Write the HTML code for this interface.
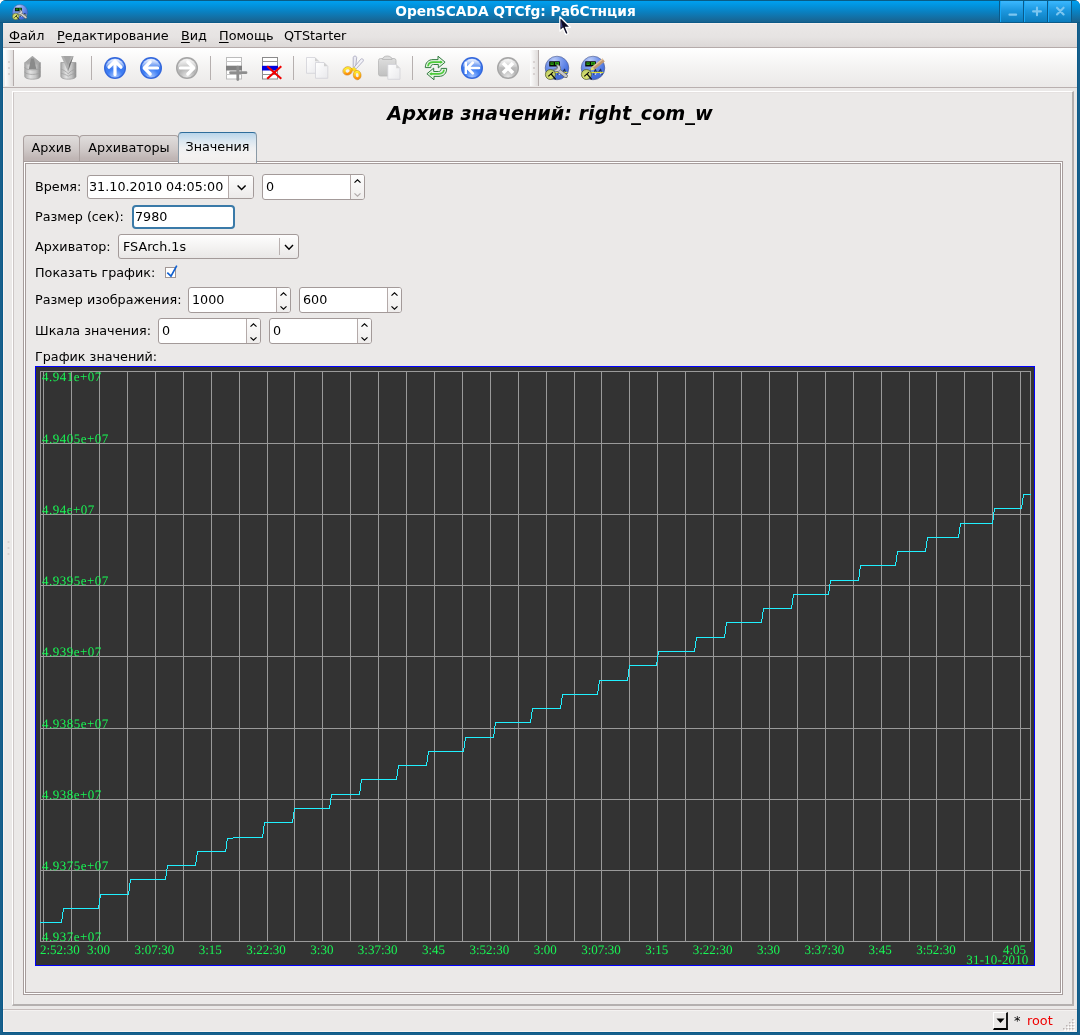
<!DOCTYPE html>
<html lang="ru"><head><meta charset="utf-8"><title>OpenSCADA QTCfg: РабСтнция</title>
<style>
html,body{margin:0;padding:0;}
body{width:1080px;height:1035px;overflow:hidden;background:#fff;position:relative;
 font-family:"DejaVu Sans","Liberation Sans",sans-serif;font-size:13px;color:#000;}
*{box-sizing:border-box;}
.abs{position:absolute;}
#win{will-change:transform;position:absolute;left:0;top:0;width:1080px;height:1035px;background:#18608c;border-radius:6px 6px 0 0;overflow:hidden;}
#titlebar{position:absolute;left:0;top:0;width:1080px;height:23px;
 background:linear-gradient(#0a5c86 0,#0a5c86 1px,#00a0f0 1px,#0292dc 6px,#0a80c0 12px,#146ea2 18px,#18628e 22px,#0a5a86 22px);}
#title{position:absolute;left:0;top:2px;width:1031px;text-align:center;color:#fff;font-weight:bold;font-size:13.75px;line-height:18px;white-space:nowrap;}
.tbtn{position:absolute;top:1px;width:24px;height:21px;background:linear-gradient(#3ab8ff,#1c98e0 45%,#0c7cbc);border-left:1px solid #0a5a8a;box-shadow:inset 1px 0 0 #18a8f8;}
.tbtn svg{position:absolute;left:0;top:0}
#client{position:absolute;left:3px;top:23px;width:1074px;height:1009px;background:#ebe9e8;box-shadow:inset 1px 0 0 #f8f2f0,inset 0 -1px 0 #f8f2f0,0 0 0 1px #0c5a88;}
#menubar{position:absolute;left:0;top:0;width:1074px;height:25px;background:linear-gradient(#f6efed 0,#f6efed 1px,#ebe8e7 1px,#e6e3e2 60%,#dcd8d7);border-bottom:1px solid #b5abaa;}
.mi{position:absolute;top:4px;font-size:12.800px;line-height:18px;white-space:nowrap;}
.mi u{text-decoration:underline;text-underline-offset:2px;}
#toolbar{position:absolute;left:0;top:25px;width:1074px;height:40px;background:linear-gradient(#ffffff,#f4f3f2 50%,#ebe9e8);border-bottom:1px solid #b9b0af;}
.tsep{position:absolute;top:8px;width:1px;height:24px;background:#b8b2b1;}
.ico{position:absolute;top:9px;width:24px;height:24px;}
.lbl{position:absolute;font-size:12.750px;line-height:16px;white-space:nowrap;}
.inp{position:absolute;background:#fff;border:1px solid #a39a99;border-radius:3px;font-size:12.750px;line-height:16px;white-space:nowrap;overflow:hidden;}
.inp span{position:absolute;left:3px;top:3px;}
.frame{position:absolute;border:1px solid #fff;}
.frame>i{position:absolute;left:0;top:0;right:0;bottom:0;border:1px solid #b4aaa9;}
.tab{position:absolute;border:1px solid #a89e9d;border-bottom:none;border-radius:4px 4px 0 0;font-size:12.750px;line-height:16px;text-align:center;white-space:nowrap;
 background:linear-gradient(#e0dddc,#d0cac9 50%,#c0b6b5 85%,#bdb3b2);border-color:#aaa09f;}
.tab.sel{background:linear-gradient(#b9d5ea,#d9e6f0 25%,#eef0f2 50%,#f4f2f1 75%,#f1efee);border-color:#2f6d9b #8a9aa6 #a69c9b #8a9aa6;}
.spinbtn{position:absolute;right:0;top:0;bottom:0;width:14px;overflow:hidden;border-left:1px solid #b4aaa9;background:linear-gradient(#fdfdfd,#efedec);}
.cbtn{position:absolute;right:0;top:0;bottom:0;width:25px;border-left:1px solid #b4aaa9;background:linear-gradient(#fdfdfd,#eceae9);}
#status{position:absolute;left:0;top:982px;width:1074px;height:26px;}
.frame3{position:absolute;border:1px solid #a69c9b;}
.frame3>i{position:absolute;left:0;top:0;right:0;bottom:0;border:1px solid #fff;}
.frame3>i>b{position:absolute;left:0;top:0;right:0;bottom:0;border:1px solid #a69c9b;}
.spinbtn svg,.cbtn svg{position:absolute;left:0;top:0}

</style></head>
<body>
<div id="win">
 <div id="titlebar">
  <div id="title">OpenSCADA QTCfg: РабСтнция</div>
  <svg class="abs" style="left:10px;top:2px" width="20" height="20" viewBox="-15.400 -15.700 30.800 30.800"><use href="#scada"/><path d="M0.400 1.400L8.800 8" stroke="#606060" stroke-width="4.200" stroke-linecap="round"/><path d="M0.400 1.400L8.800 8" stroke="#d0d0d0" stroke-width="2.800" stroke-linecap="round"/><path d="M-0.600 -3.200C1.600 -3.600 3.600 -2 3.600 0.400C3.600 2.400 1.800 3.600 0 3.600C-1.600 3.600 -3 2.600 -3.200 1L-0.800 1.400L0.600 0.200L0.200 -1.600Z" fill="#dcdcdc" stroke="#6a6a6a" stroke-width=".8" stroke-linejoin="round"/></svg>
  <div class="tbtn" style="left:999px"><svg width="24" height="21" viewBox="0 0 24 21"><rect x="8.400" y="12.500" width="8.800" height="2.300" rx="1.150" fill="#7cc6f0"/></svg></div>
  <div class="tbtn" style="left:1023px"><svg width="24" height="21" viewBox="0 0 24 21"><path d="M13 6.500V14.300M9.100 10.400H16.900" stroke="#7cc6f0" stroke-width="2.100" stroke-linecap="round" fill="none"/></svg></div>
  <div class="tbtn" style="left:1047px;width:25px;border-right:1px solid #0a5a8a"><svg width="24" height="21" viewBox="0 0 24 21"><path d="M9 6.700L15.600 13.500M15.600 6.700L9 13.500" stroke="#7cc6f0" stroke-width="2.100" stroke-linecap="round" fill="none"/></svg></div>
 </div>
 <div id="client">
  <div id="menubar">
   <div class="mi" style="left:6px"><u>Ф</u>айл</div>
   <div class="mi" style="left:54px"><u>Р</u>едактирование</div>
   <div class="mi" style="left:178px"><u>В</u>ид</div>
   <div class="mi" style="left:216px"><u>П</u>омощь</div>
   <div class="mi" style="left:281px">QTStarter</div>
  </div>
  <div id="toolbar">
  <svg class="abs" style="left:-3px;top:-48px" width="620" height="92" viewBox="0 0 620 92">
<defs>
 <linearGradient id="gcyl" x1="0" x2="1" y1="0" y2="0"><stop offset="0" stop-color="#a8a8a8"/><stop offset=".35" stop-color="#e2e2e2"/><stop offset=".7" stop-color="#c4c4c4"/><stop offset="1" stop-color="#8c8c8c"/></linearGradient>
 <linearGradient id="garr" x1="0" x2="0" y1="0" y2="1"><stop offset="0" stop-color="#8a8a8a"/><stop offset="1" stop-color="#a4a4a4"/></linearGradient>
 <radialGradient id="gblue" cx=".5" cy=".95" r=".9"><stop offset="0" stop-color="#a9c8ff"/><stop offset=".45" stop-color="#3f7ff4"/><stop offset=".75" stop-color="#3b78ee"/><stop offset="1" stop-color="#8fb4fb"/></radialGradient>
 <linearGradient id="gshine" x1="0" x2="0" y1="0" y2="1"><stop offset="0" stop-color="#fff" stop-opacity=".85"/><stop offset="1" stop-color="#fff" stop-opacity=".1"/></linearGradient>
 <radialGradient id="ggray" cx=".5" cy=".95" r=".9"><stop offset="0" stop-color="#e6e6e6"/><stop offset=".5" stop-color="#b4b4b4"/><stop offset="1" stop-color="#d0d0d0"/></radialGradient>
 <linearGradient id="gpage" x1="0" x2="1" y1="0" y2="1"><stop offset="0" stop-color="#ffffff"/><stop offset="1" stop-color="#e9e9ec"/></linearGradient>
 <linearGradient id="gclip" x1="0" x2="0" y1="0" y2="1"><stop offset="0" stop-color="#dedede"/><stop offset="1" stop-color="#c0c0c0"/></linearGradient>
 <linearGradient id="ggold" x1="0" x2="1" y1="0" y2="1"><stop offset="0" stop-color="#ffd24a"/><stop offset="1" stop-color="#e89a10"/></linearGradient>
 <linearGradient id="ggold2" gradientUnits="userSpaceOnUse" x1="0" x2="0" y1="66" y2="80"><stop offset="0" stop-color="#ffee30"/><stop offset=".5" stop-color="#ffc820"/><stop offset="1" stop-color="#ff9410"/></linearGradient>
 <linearGradient id="ggold3" x1="0" x2="0" y1="0" y2="1"><stop offset="0" stop-color="#ffee30"/><stop offset=".45" stop-color="#ffc41c"/><stop offset="1" stop-color="#ff8c08"/></linearGradient>
 <linearGradient id="ggreen" x1="0" x2="0" y1="0" y2="1"><stop offset="0" stop-color="#9ee89a"/><stop offset="1" stop-color="#3fae3f"/></linearGradient>
 <radialGradient id="gscada" cx=".38" cy=".18" r=".85"><stop offset="0" stop-color="#bccdf8"/><stop offset=".4" stop-color="#7898ec"/><stop offset=".75" stop-color="#4a74e0"/><stop offset="1" stop-color="#3c64d4"/></radialGradient>
 <filter id="bl" x="-20%" y="-20%" width="140%" height="140%"><feGaussianBlur stdDeviation=".45"/></filter>
 <g id="circ"><circle r="11" fill="#3468dc"/><circle r="9.6" fill="url(#gblue)"/><path d="M-9.200 -1.500A9.400 9.400 0 0 1 9.200 -1.500Q0 1.500 -9.200 -1.500Z" fill="url(#gshine)"/></g>
 <g id="gcirc"><circle r="11" fill="#a6a6a6"/><circle r="9.6" fill="url(#ggray)"/><path d="M-9.200 -1.500A9.400 9.400 0 0 1 9.200 -1.500Q0 1.500 -9.200 -1.500Z" fill="url(#gshine)"/></g>
 <g id="scada">
  <circle r="11.800" fill="url(#gscada)" stroke="#4a5888" stroke-width=".6"/>
  <path d="M0.800 7.200L2.200 1.200L3.600 4.400L5.600 4.400L7.600 1.200L9 6.800" stroke="#1c2c60" stroke-width="1.100" fill="none" stroke-linejoin="round"/>
  <path d="M1.600 5.600L2.300 6.800L3 5M7.200 5L7.800 6.200L8.400 5" stroke="#e8ecf8" stroke-width=".8" fill="none"/>
  <path d="M-9 4.400H10.300" stroke="#e4e430" stroke-width="1.100"/>
  <rect x="-7.800" y="-6.800" width="10.700" height="5.400" rx=".5" fill="#060a06"/>
  <path d="M-6.600 -5.800h3.300v2.900h-3.300zM-2 -6h4v3.100h-4z" fill="#2a9a10"/>
  <path d="M-5.600 -5.200h1.400v1.200h-1.400zM-0.600 -5.400l1.800 1.000l-1.800 1z" fill="#0a3a06" opacity=".7"/>
  <circle cx="-6.600" cy="6.500" r="5" fill="url(#ggauge)" stroke="#4a5220" stroke-width=".7"/>
  <path d="M-8.700 8.400L-4 4.100M-5.900 6L-1.300 11.400" stroke="#0c0c0c" stroke-width="1.200" fill="none"/>
 </g>
 <radialGradient id="ggauge" cx=".5" cy=".6" r=".6"><stop offset="0" stop-color="#e4ea70"/><stop offset="1" stop-color="#b8c868"/></radialGradient>
</defs>
<!-- handle 1 -->
<rect x="5" y="50" width="8" height="36" fill="url(#hgrad)"/>
<linearGradient id="hgrad" x1="0" x2="1" y1="0" y2="0"><stop offset="0" stop-color="#fdfdfd"/><stop offset="1" stop-color="#e0dddc"/></linearGradient>
<rect x="13" y="50" width="1" height="36" fill="#b4acab"/>
<g fill="#d2cccb"><circle cx="9" cy="62" r="1.1"/><circle cx="9" cy="68" r="1.1"/><circle cx="9" cy="74" r="1.1"/></g>
<!-- handle 2 -->
<rect x="530" y="50" width="8" height="36" fill="url(#hgrad)"/>
<rect x="538" y="50" width="1" height="36" fill="#b4acab"/>
<g fill="#d2cccb"><circle cx="534" cy="62" r="1.1"/><circle cx="534" cy="68" r="1.1"/><circle cx="534" cy="74" r="1.1"/></g>
<!-- separators -->
<g fill="#b6b0af"><rect x="91" y="56" width="1" height="24"/><rect x="210" y="56" width="1" height="24"/><rect x="293" y="56" width="1" height="24"/><rect x="412" y="56" width="1" height="24"/></g>

<!-- 1 db load -->
<g filter="url(#bl)">
 <path d="M24.700 62.500v14c0 1.600 3.500 2.700 7.850 2.700s7.850-1.100 7.850-2.700v-14z" fill="url(#gcyl)" stroke="#989898" stroke-width=".7"/>
 <path d="M24.700 67.200c0 1.600 3.500 2.700 7.850 2.700s7.850-1.100 7.850-2.700M24.700 71.700c0 1.600 3.500 2.700 7.850 2.700s7.850-1.100 7.850-2.700" stroke="#9c9c9c" stroke-width=".9" fill="none" opacity=".8"/>
 <path d="M32.400 56L39.600 62H25.400Z" fill="#a2a2a2"/>
 <path d="M25.400 62L32.400 56L39.600 62L38 64.500H27Z" fill="#a8a8a8" opacity=".9"/>
 <path d="M31 58.500H33.900L36.400 69.300H28.800Z" fill="#8a8a8a"/>
</g>
<!-- 2 db save -->
<g filter="url(#bl)">
 <path d="M60.800 62.500v14c0 1.600 3.400 2.700 7.600 2.700s7.600-1.100 7.600-2.700v-14z" fill="url(#gcyl)" stroke="#989898" stroke-width=".7"/>
 <path d="M60.800 69c2 .5 5.500 2.500 7.400 4.800c1.800-2.500 5.200-4.300 7.800-4.800M60.800 73.200c2 .5 5.500 1.500 7.400 3c1.800-1.500 5.200-2.500 7.800-3" stroke="#9c9c9c" stroke-width=".9" fill="none" opacity=".8"/>
 <path d="M61.100 56.100H73.600L68 71.500Z" fill="#b2b2b2"/>
 <path d="M63.500 56.100H71L68 66Z" fill="#a4a4a4"/>
 <path d="M73.600 56.100L68 71.500L69.200 64Z" fill="#6e6e6e"/>
</g>
<!-- 3 up -->
<g transform="translate(115 68)"><use href="#circ"/><path d="M0 -6.800L-6 -0.800M0 -6.800L6 -0.800M0 -5V6.600" stroke="#fff" stroke-width="3.200" stroke-linecap="round" fill="none"/></g>
<!-- 4 back -->
<g transform="translate(151 68)"><use href="#circ"/><path d="M-6.800 0L-0.800 -6M-6.800 0L-0.800 6M-5 0H6.600" stroke="#fff" stroke-width="3.200" stroke-linecap="round" fill="none"/></g>
<!-- 5 forward (disabled) -->
<g transform="translate(187 68)"><use href="#gcirc"/><path d="M6.800 0L0.800 -6M6.800 0L0.800 6M5 0H-6.600" stroke="#fff" stroke-width="3.200" stroke-linecap="round" fill="none"/></g>
<!-- 6 add item -->
<g>
 <rect x="226.500" y="57.500" width="15" height="21.500" fill="#fff" stroke="#bcbcbc" stroke-width="1"/>
 <path d="M226 61.500H242M226 74.500H242" stroke="#c4c4c4" stroke-width="1"/>
 <rect x="226" y="65.700" width="16" height="4.800" fill="#808080"/>
 <path d="M230.500 72.700H246M237.800 67.200V79.600" stroke="#8e8e8e" stroke-width="2.800" fill="none" stroke-linecap="round"/>
</g>
<!-- 7 del item -->
<g>
 <rect x="262.500" y="57.500" width="15" height="21.500" fill="#fff" stroke="#8a8a8a" stroke-width="1"/>
 <path d="M262 61.500H278M262 74.500H278" stroke="#909090" stroke-width="1"/>
 <rect x="262" y="65.800" width="16" height="4.700" fill="#0000e0"/>
 <path d="M267.200 66.200L281.300 78.800M281.300 66.200L267.200 78.800" stroke="#f00000" stroke-width="2.100" fill="none"/>
</g>
<!-- 8 copy (disabled) -->
<g filter="url(#bl)">
 <path d="M306.500 57.500h8.500l3.800 3.800v12h-12.300z" fill="url(#gpage)" stroke="#d2d2d8" stroke-width=".8"/>
 <path d="M315 57.500v3.800h3.800z" fill="#d0d0d0"/>
 <path d="M315.500 62.500h8.500l3.800 3.800v12h-12.300z" fill="url(#gpage)" stroke="#d2d2d8" stroke-width=".8"/>
 <path d="M324 62.500v3.800h3.800z" fill="#d0d0d0"/>
</g>
<!-- 9 cut -->
<g>
 <path d="M353.200 67.600V57.600C353.200 55.600 356.700 55.600 356.700 57.600L355.600 67.600Z" fill="#ececf4" stroke="#9a9ab2" stroke-width=".7"/>
 <path d="M354 67.400L360.600 59.400C362 57.800 364.300 59.600 363 61.300L356.200 68.800Z" fill="#f2f2f8" stroke="#9a9ab2" stroke-width=".7"/>
 <path d="M350.400 68.600L354.200 67.200L356.200 69.200L357.400 71.600L353 71.400Z" fill="url(#ggold2)"/>
 <ellipse cx="347.600" cy="70.900" rx="3.300" ry="2.850" transform="rotate(-18 347.600 70.900)" fill="none" stroke="url(#ggold3)" stroke-width="2.450"/>
 <ellipse cx="357.200" cy="75.100" rx="2.650" ry="3.400" transform="rotate(-8 357.200 75.100)" fill="none" stroke="url(#ggold3)" stroke-width="2.450"/>
 <ellipse cx="347.600" cy="70.900" rx="4.800" ry="4.200" transform="rotate(-18 347.600 70.900)" fill="none" stroke="#c87808" stroke-width=".6" opacity=".8"/>
 <ellipse cx="357.200" cy="75.100" rx="3.900" ry="4.700" transform="rotate(-8 357.200 75.100)" fill="none" stroke="#c87808" stroke-width=".6" opacity=".8"/>
</g>
<!-- 10 paste (disabled) -->
<g filter="url(#bl)">
 <rect x="378.500" y="58.500" width="17.500" height="17.500" rx="2" fill="url(#gclip)" stroke="#b8b8b8" stroke-width=".8"/>
 <path d="M382.500 59.500c0-2 2-3.500 4.800-3.500s4.800 1.500 4.800 3.500z" fill="#dcdcdc" stroke="#b4b4b4" stroke-width=".8"/>
 <path d="M387.800 64.500h8.400l3.800 3.800v11h-12.200z" fill="url(#gpage)" stroke="#d2d2d8" stroke-width=".8"/>
 <path d="M396.200 64.500v3.800h3.800z" fill="#d4d4d4"/>
</g>
<!-- 11 refresh -->
<g id="rfa">
 <path d="M425.300 67.600C425.300 62.500 428.500 59.600 433 59.600H438V56.200L445.100 62.200L438.300 67.900V64.500H433.500C431.500 64.500 430.800 65.800 430.800 67.600Z" fill="#e4f2e2" stroke="#327c40" stroke-width="1" stroke-linejoin="round"/>
 <path d="M428.100 65.600C428.600 63.400 430.400 62.150 433 62.150H441.400" stroke="#4ccc3a" stroke-width="1.700" stroke-linecap="round" fill="none"/>
 <path d="M440.200 60.500L442.600 62.150L440.200 63.800Z" fill="#4ccc3a"/>
</g>
<use href="#rfa" transform="rotate(180 436 68)"/>
<!-- 12 start -->
<g transform="translate(472 68)"><use href="#circ"/><path d="M-4.600 0L0.800 -5.400M-4.600 0L0.800 5.400M-3 0H7" stroke="#fff" stroke-width="2.700" stroke-linecap="round" fill="none"/><path d="M-6.200 -6V6" stroke="#fff" stroke-width="2.400" fill="none"/></g>
<!-- 13 stop (disabled) -->
<g transform="translate(508 68)"><use href="#gcirc"/><path d="M-5 -5L5 5M5 -5L-5 5" stroke="#fff" stroke-width="3.600" fill="none"/></g>
<!-- 14 scada cfg -->
<g transform="translate(557 68)"><use href="#scada"/>
 <path d="M0.400 1.400L8.800 8" stroke="#606060" stroke-width="4" stroke-linecap="round"/>
 <path d="M0.400 1.400L8.800 8" stroke="#c8c8c8" stroke-width="2.700" stroke-linecap="round"/>
 <path d="M-0.600 -3.200C1.600 -3.600 3.600 -2 3.600 0.400C3.600 2.400 1.800 3.600 0 3.600C-1.600 3.600 -3 2.600 -3.200 1L-0.800 1.400L0.600 0.200L0.200 -1.600Z" fill="#d4d4d4" stroke="#6a6a6a" stroke-width=".7" stroke-linejoin="round"/>
</g>
<!-- 15 scada dev -->
<g transform="translate(593 68)"><use href="#scada"/>
 <path d="M10.600 -8L0.200 0.200" stroke="#c09870" stroke-width="3.700"/>
 <path d="M9.900 -9L-0.500 -0.800" stroke="#e4c4a0" stroke-width="1.400"/>
 <path d="M-1 -1.600L1.600 1.600L-3.200 2.400Z" fill="#e8e070"/>
 <path d="M-2.400 1.400L-3.300 2.500L-1.900 2.300Z" fill="#181818"/>
</g>
</svg>

  </div>
 </div>

 <!-- central frame -->
 <div class="abs" style="left:12px;top:91px;width:1062px;height:915px;border-top:1px solid #fff;border-left:1px solid #fff;border-right:2px solid #b4b0af;border-bottom:2px solid #b4b0af"><div class="abs" style="left:0;top:0;right:0;bottom:0;border-left:1px solid #cdc7c6;border-top:1px solid #e6e2e1"></div></div>
 <div class="abs" id="heading" style="left:25px;top:101px;width:1050px;text-align:center;font-size:19.2px;line-height:26px;font-weight:bold;font-style:italic;white-space:nowrap">Архив значений: right_com_w</div>

 <svg class="abs" style="left:6px;top:539px" width="5" height="18" viewBox="0 0 5 18"><g fill="#d6d0cf"><circle cx="2.500" cy="3" r="1.100"/><circle cx="2.500" cy="9" r="1.100"/><circle cx="2.500" cy="15" r="1.100"/></g></svg>
 <!-- tabs -->
 <div class="tab" style="left:23px;top:135px;width:57px;height:27px;padding-top:4px">Архив</div>
 <div class="tab" style="left:79px;top:135px;width:100px;height:27px;padding-top:4px">Архиваторы</div>
 <div class="frame3" style="left:23px;top:161px;width:1040px;height:834px"><i><b></b></i></div>
 <div class="tab sel" style="left:178px;top:132px;width:79px;height:31px;padding-top:6px">Значения</div>

 <!-- form -->
 <div class="lbl" style="left:35px;top:179px">Время:</div>
 <div class="inp" style="left:87px;top:175px;width:167px;height:24px"><span style="left:1px">31.10.2010 04:05:00</span><div class="cbtn"><svg width="24" height="22" viewBox="0 0 24 22"><path d="M8.600 9.400L12.600 13.600L16.600 9.400" stroke="#000" stroke-width="1.400" fill="none"/></svg></div></div>
 <div class="inp" style="left:262px;top:174px;width:103px;height:26px"><span style="top:4px">0</span><div class="spinbtn"><svg width="13" height="24" viewBox="0 0 13 24"><path d="M3.500 7.700L6.500 4.800L9.500 7.700" stroke="#000" stroke-width="1.150" fill="none"/><path d="M3.500 18.300L6.500 21.200L9.500 18.300" stroke="#b0aaa9" stroke-width="1.150" fill="none"/></svg></div></div>

 <div class="lbl" style="left:35px;top:209px">Размер (сек):</div>
 <div class="inp" style="left:132px;top:205px;width:103px;height:24px;border:2px solid #3a7aa8;border-radius:4px"><span style="top:2px;left:1px">7980</span></div>

 <div class="lbl" style="left:35px;top:239px">Архиватор:</div>
 <div class="inp" style="left:118px;top:234px;width:181px;height:25px;background:linear-gradient(#fefefe,#f4f3f2 50%,#e9e7e6)"><span style="top:4px;left:4px">FSArch.1s</span><div class="abs" style="left:160px;top:3px;width:1px;height:17px;background:#b9b1b0"></div><svg class="abs" style="left:162px;top:0" width="18" height="23" viewBox="0 0 18 23"><path d="M4 10L8 14.300L12 10" stroke="#000" stroke-width="1.400" fill="none"/></svg></div>

 <div class="lbl" style="left:35px;top:265px">Показать график:</div>
 <div class="abs" style="left:165px;top:267px;width:11px;height:11px;background:#fff;border:1px solid #a09694"></div>
 <svg class="abs" style="left:163px;top:263px" width="16" height="16" viewBox="0 0 16 16"><path d="M4.300 9.600L8 13.200L13.800 2.600" stroke="#1060d0" stroke-width="1.650" fill="none" stroke-linejoin="miter"/></svg>

 <div class="lbl" style="left:35px;top:292px">Размер изображения:</div>
 <div class="inp" style="left:188px;top:287px;width:103px;height:26px"><span style="top:4px">1000</span><div class="spinbtn"><svg width="13" height="24" viewBox="0 0 13 24"><path d="M3.500 7.700L6.500 4.800L9.500 7.700" stroke="#000" stroke-width="1.150" fill="none"/><path d="M3.500 18.300L6.500 21.200L9.500 18.300" stroke="#000" stroke-width="1.150" fill="none"/></svg></div></div>
 <div class="inp" style="left:299px;top:287px;width:103px;height:26px"><span style="top:4px">600</span><div class="spinbtn"><svg width="13" height="24" viewBox="0 0 13 24"><path d="M3.500 7.700L6.500 4.800L9.500 7.700" stroke="#000" stroke-width="1.150" fill="none"/><path d="M3.500 18.300L6.500 21.200L9.500 18.300" stroke="#000" stroke-width="1.150" fill="none"/></svg></div></div>

 <div class="lbl" style="left:35px;top:323px">Шкала значения:</div>
 <div class="inp" style="left:158px;top:318px;width:103px;height:26px"><span style="top:4px">0</span><div class="spinbtn"><svg width="13" height="24" viewBox="0 0 13 24"><path d="M3.500 7.700L6.500 4.800L9.500 7.700" stroke="#000" stroke-width="1.150" fill="none"/><path d="M3.500 18.300L6.500 21.200L9.500 18.300" stroke="#000" stroke-width="1.150" fill="none"/></svg></div></div>
 <div class="inp" style="left:269px;top:318px;width:103px;height:26px"><span style="top:4px">0</span><div class="spinbtn"><svg width="13" height="24" viewBox="0 0 13 24"><path d="M3.500 7.700L6.500 4.800L9.500 7.700" stroke="#000" stroke-width="1.150" fill="none"/><path d="M3.500 18.300L6.500 21.200L9.500 18.300" stroke="#000" stroke-width="1.150" fill="none"/></svg></div></div>

 <div class="lbl" style="left:35px;top:349px">График значений:</div>

 <div class="abs" style="left:35px;top:366px;width:1000px;height:600px;">
<svg id="chart" width="1000" height="600" viewBox="0 0 1000 600" shape-rendering="crispEdges">
<rect x="0" y="0" width="1000" height="600" fill="#0000ff"/>
<rect x="1" y="1" width="998" height="598" fill="#333333"/>
<path d="M8.5 5V576M36.5 5V576M64.5 5V576M92.5 5V576M120.5 5V576M148.5 5V576M176.5 5V576M204.5 5V576M232.5 5V576M259.5 5V576M287.5 5V576M315.5 5V576M343.5 5V576M371.5 5V576M399.5 5V576M427.5 5V576M455.5 5V576M483.5 5V576M511.5 5V576M539.5 5V576M566.5 5V576M594.5 5V576M622.5 5V576M650.5 5V576M678.5 5V576M706.5 5V576M734.5 5V576M762.5 5V576M790.5 5V576M818.5 5V576M846.5 5V576M874.5 5V576M901.5 5V576M929.5 5V576M957.5 5V576M985.5 5V576M5 77.5H996M5 148.5H996M5 219.5H996M5 290.5H996M5 362.5H996M5 433.5H996M5 504.5H996" stroke="#9a9a9a" stroke-width="1" fill="none"/>
<rect x="5.5" y="5.5" width="990" height="570" fill="none" stroke="#9a9a9a" stroke-width="1"/>
<path d="M5 556h22v1h-22zM26 553h1v3h-1zM27 546h1v7h-1zM28 542h1v4h-1zM28 542h36v1h-36zM63 539h1v3h-1zM64 532h1v7h-1zM65 528h1v4h-1zM65 528h29v1h-29zM93 525h1v3h-1zM94 517h1v8h-1zM95 513h1v4h-1zM95 513h36v1h-36zM130 510h1v3h-1zM131 503h1v7h-1zM132 499h1v4h-1zM132 499h29v1h-29zM160 496h1v3h-1zM161 489h1v7h-1zM162 485h1v4h-1zM162 485h29v1h-29zM190 483h1v2h-1zM191 475h1v8h-1zM192 472h1v3h-1zM192 472h6v1h-6zM198 471h30v1h-30zM227 468h1v3h-1zM228 460h1v8h-1zM229 456h1v4h-1zM229 456h29v1h-29zM257 453h1v3h-1zM258 446h1v7h-1zM259 442h1v4h-1zM259 442h36v1h-36zM294 439h1v3h-1zM295 432h1v7h-1zM296 428h1v4h-1zM296 428h29v1h-29zM324 425h1v3h-1zM325 417h1v8h-1zM326 413h1v4h-1zM326 413h36v1h-36zM361 410h1v3h-1zM362 403h1v7h-1zM363 399h1v4h-1zM363 399h29v1h-29zM391 396h1v3h-1zM392 389h1v7h-1zM393 385h1v4h-1zM393 385h36v1h-36zM428 382h1v3h-1zM429 375h1v7h-1zM430 371h1v4h-1zM430 371h29v1h-29zM458 368h1v3h-1zM459 360h1v8h-1zM460 356h1v4h-1zM460 356h36v1h-36zM495 353h1v3h-1zM496 346h1v7h-1zM497 342h1v4h-1zM497 342h29v1h-29zM525 339h1v3h-1zM526 332h1v7h-1zM527 328h1v4h-1zM527 328h36v1h-36zM562 325h1v3h-1zM563 318h1v7h-1zM564 314h1v4h-1zM564 314h29v1h-29zM592 311h1v3h-1zM593 303h1v8h-1zM594 299h1v4h-1zM594 299h28v1h-28zM621 296h1v3h-1zM622 289h1v7h-1zM623 285h1v4h-1zM623 285h37v1h-37zM659 282h1v3h-1zM660 275h1v7h-1zM661 271h1v4h-1zM661 271h29v1h-29zM689 268h1v3h-1zM690 260h1v8h-1zM691 256h1v4h-1zM691 256h36v1h-36zM726 253h1v3h-1zM727 246h1v7h-1zM728 242h1v4h-1zM728 242h29v1h-29zM756 239h1v3h-1zM757 232h1v7h-1zM758 228h1v4h-1zM758 228h36v1h-36zM793 225h1v3h-1zM794 218h1v7h-1zM795 214h1v4h-1zM795 214h29v1h-29zM823 211h1v3h-1zM824 203h1v8h-1zM825 199h1v4h-1zM825 199h36v1h-36zM860 196h1v3h-1zM861 189h1v7h-1zM862 185h1v4h-1zM862 185h29v1h-29zM890 182h1v3h-1zM891 175h1v7h-1zM892 171h1v4h-1zM892 171h32v1h-32zM923 168h1v3h-1zM924 161h1v7h-1zM925 157h1v4h-1zM925 157h33v1h-33zM957 154h1v3h-1zM958 146h1v8h-1zM959 142h1v4h-1zM959 142h28v1h-28zM986 139h1v3h-1zM987 132h1v7h-1zM988 128h1v4h-1zM988 128h8v1h-8z" fill="#20f0ff"/>
<g font-family="'Liberation Serif',serif" font-size="13" fill="#18f654" shape-rendering="auto" text-rendering="geometricPrecision">
<text x="7" y="15.0" letter-spacing="0.5">4.941e+07</text>
<text x="7" y="77.0" letter-spacing="0.5">4.9405e+07</text>
<text x="7" y="148.0" letter-spacing="0.5">4.94e+07</text>
<text x="7" y="219.0" letter-spacing="0.5">4.9395e+07</text>
<text x="7" y="290.0" letter-spacing="0.5">4.939e+07</text>
<text x="7" y="362.0" letter-spacing="0.5">4.9385e+07</text>
<text x="7" y="433.0" letter-spacing="0.5">4.938e+07</text>
<text x="7" y="504.0" letter-spacing="0.5">4.9375e+07</text>
<text x="7" y="575.0" letter-spacing="0.5">4.937e+07</text>
<text x="5" y="588">2:52:30</text>
<text x="63.5" y="588" text-anchor="middle">3:00</text>
<text x="119.4" y="588" text-anchor="middle">3:07:30</text>
<text x="175.2" y="588" text-anchor="middle">3:15</text>
<text x="231.0" y="588" text-anchor="middle">3:22:30</text>
<text x="286.9" y="588" text-anchor="middle">3:30</text>
<text x="342.7" y="588" text-anchor="middle">3:37:30</text>
<text x="398.5" y="588" text-anchor="middle">3:45</text>
<text x="454.3" y="588" text-anchor="middle">3:52:30</text>
<text x="510.2" y="588" text-anchor="middle">3:00</text>
<text x="566.0" y="588" text-anchor="middle">3:07:30</text>
<text x="621.8" y="588" text-anchor="middle">3:15</text>
<text x="677.6" y="588" text-anchor="middle">3:22:30</text>
<text x="733.5" y="588" text-anchor="middle">3:30</text>
<text x="789.3" y="588" text-anchor="middle">3:37:30</text>
<text x="845.1" y="588" text-anchor="middle">3:45</text>
<text x="901.0" y="588" text-anchor="middle">3:52:30</text>
<text x="991" y="588" text-anchor="end">4:05</text>
<text x="993.5" y="597.5" text-anchor="end" letter-spacing="0.15">31-10-2010</text>
</g></svg>
 </div>

 <svg class="abs" style="left:557px;top:14px" width="18" height="24" viewBox="-2 -2 18 24"><path d="M0.800 0.800V15.200L4 12.200L6.700 18.600L9.300 17.500L6.600 11.300H11.400Z" fill="#0c0c24" stroke="#fff" stroke-width="1.300" stroke-linejoin="round"/><path d="M1.800 4V12L3.600 10.500Z" fill="#4a4e9a" opacity=".8"/></svg>
 <!-- status bar -->
 <div class="abs" style="left:3px;top:1009px;width:1074px;height:1px;background:#c6bdbc"></div>
 <div class="abs" style="left:3px;top:1010px;width:1074px;height:1px;background:#f4f2f1"></div>
 <div class="abs" style="left:993px;top:1012px;width:15px;height:18px;background:#eae8e7;border-right:2px solid #000;border-right-color:#1a1a1a;border-bottom:2px solid #000;border-top:1px solid #fff;border-left:1px solid #fff"><svg class="abs" style="left:2px;top:5px" width="9" height="6" viewBox="0 0 9 6"><path d="M0.500 0.500H8.500L4.500 5Z" fill="#000"/></svg></div>
 <div class="abs" style="left:1014px;top:1013px;font-size:13px;line-height:16px;">*</div>
 <div class="abs" style="left:1027px;top:1013px;font-size:12.800px;line-height:16px;color:#f00000">root</div>
 <svg class="abs" style="left:1063px;top:1018px" width="14" height="14" viewBox="0 0 14 14"><g fill="#fbfaf9"><rect x="10" y="2" width="2" height="2"/><rect x="7" y="5" width="2" height="2"/><rect x="10" y="5" width="2" height="2"/><rect x="4" y="8" width="2" height="2"/><rect x="7" y="8" width="2" height="2"/><rect x="10" y="8" width="2" height="2"/><rect x="1" y="11" width="2" height="2"/><rect x="4" y="11" width="2" height="2"/><rect x="7" y="11" width="2" height="2"/><rect x="10" y="11" width="2" height="2"/></g><g fill="#bdb5b4"><rect x="9" y="1" width="1.500" height="1.500"/><rect x="6" y="4" width="1.500" height="1.500"/><rect x="9" y="4" width="1.500" height="1.500"/><rect x="3" y="7" width="1.500" height="1.500"/><rect x="6" y="7" width="1.500" height="1.500"/><rect x="9" y="7" width="1.500" height="1.500"/><rect x="0" y="10" width="1.500" height="1.500"/><rect x="3" y="10" width="1.500" height="1.500"/><rect x="6" y="10" width="1.500" height="1.500"/><rect x="9" y="10" width="1.500" height="1.500"/></g></svg>
</div>

</body></html>
